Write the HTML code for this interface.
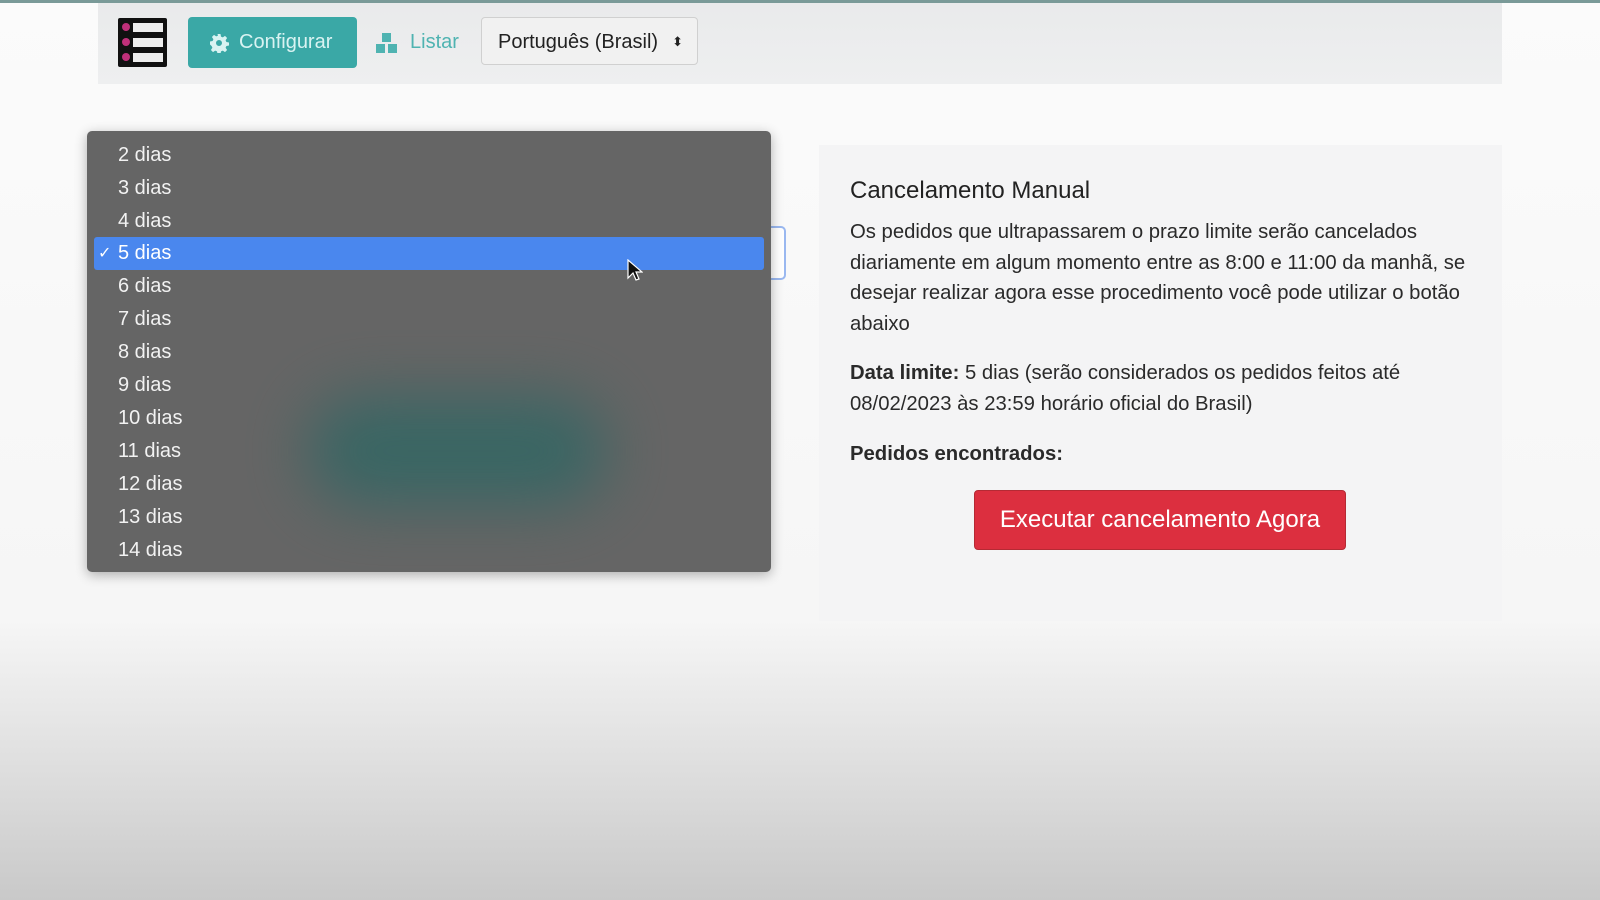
<!DOCTYPE html>
<html><head><meta charset="utf-8"><style>
body{margin:0;width:1600px;height:900px;overflow:hidden;font-family:"Liberation Sans",Arial,sans-serif;background:linear-gradient(#fbfbfb 0,#f6f6f6 620px,#c9c9c9 900px);position:relative}
.top{position:absolute;left:0;top:0;width:1600px;height:3px;background:#7a9a98}
.hdr{position:absolute;left:98px;top:3px;width:1404px;height:81px;background:linear-gradient(#e9eaeb,#eeeff0)}
.logo{position:absolute;left:118px;top:18px;width:49px;height:49px;background:#111;border-radius:2px}
.logo div{position:absolute;left:15px;width:30px;height:9px;background:#eee}
.logo span{position:absolute;left:4px;width:8px;height:8px;border-radius:50%;background:#c0307a}
.btn{position:absolute;left:188px;top:17px;width:169px;height:51px;background:#3aa8a6;border-radius:4px;color:#d9f3f2;font-size:20px;line-height:51px}
.lst{position:absolute;left:376px;top:17px;height:51px;line-height:51px;color:#4fb3b1;font-size:20px}
.sel{position:absolute;left:481px;top:17px;width:217px;height:48px;border:1px solid #d0d0d0;border-radius:4px;background:#f1f1f1;font-size:20px;line-height:48px;color:#222;box-sizing:border-box;padding-left:16px}
.dd{position:absolute;left:87px;top:131px;width:684px;height:441px;background:#656565;border-radius:5px;box-shadow:0 3px 12px rgba(0,0,0,.3);overflow:hidden}
.blur{position:absolute;left:220px;top:265px;width:300px;height:110px;background:#2f6663;border-radius:55px;filter:blur(30px);opacity:.8}
.it{position:absolute;left:31px;font-size:20px;color:#f2f2f2;height:33px;line-height:33px}
.hl{position:absolute;left:7px;top:106px;width:670px;height:33px;background:#4a87ee;border-radius:3px}
.pan{position:absolute;left:819px;top:145px;width:683px;height:476px;background:#f4f4f5}
.pan h2{position:absolute;left:31px;top:32px;margin:0;font-size:24px;font-weight:normal;color:#222}
.pan p{position:absolute;left:31px;margin:0;width:640px;font-size:20.3px;line-height:30.5px;color:#2a2a2a}
.red{position:absolute;left:155px;top:345px;width:372px;height:60px;background:#dc2f3f;border-radius:4px;border:1px solid #b52a34;box-sizing:border-box;color:#fff;font-size:24px;line-height:58px;text-align:center}
</style></head><body>
<div class="top"></div>
<div class="hdr"></div>
<div class="logo"><div style="top:5px"></div><div style="top:20px"></div><div style="top:35px"></div><span style="top:5px"></span><span style="top:20px"></span><span style="top:35px"></span></div>
<div class="btn"><svg style="position:absolute;left:21px;top:16px" width="20" height="20" viewBox="0 0 20 20"><path fill="#d9f3f2" d="M8.5 1h3l.5 2.6 1.8.8 2.2-1.5 2.1 2.1-1.5 2.2.8 1.8 2.6.5v3l-2.6.5-.8 1.8 1.5 2.2-2.1 2.1-2.2-1.5-1.8.8-.5 2.6h-3l-.5-2.6-1.8-.8-2.2 1.5-2.1-2.1 1.5-2.2-.8-1.8L1 11.5v-3l2.6-.5.8-1.8-1.5-2.2 2.1-2.1 2.2 1.5 1.8-.8zM10 7a3 3 0 100 6 3 3 0 000-6z"/></svg><span style="position:absolute;left:51px">Configurar</span></div>
<div class="lst"><svg style="position:absolute;left:0;top:16px" width="22" height="20" viewBox="0 0 22 20"><rect x="6" y="0" width="9" height="9" fill="#4fb3b1"/><rect x="0" y="11" width="9" height="9" fill="#4fb3b1"/><rect x="12" y="11" width="9" height="9" fill="#4fb3b1"/></svg><span style="position:absolute;left:34px">Listar</span></div>
<div class="sel">Português (Brasil) <span style="position:absolute;right:14px;font-size:13px">⬍</span></div>
<div style="position:absolute;left:760px;top:226px;width:22px;height:50px;border:2px solid #9ab8f0;border-radius:5px;background:#fff"></div>
<div class="dd"><div class="blur"></div><div class="hl"></div>
<div class="it" style="top:8px">2 dias</div><div class="it" style="top:41px">3 dias</div><div class="it" style="top:74px">4 dias</div>
<div class="it" style="top:106px;color:#fff"><span style="position:absolute;left:-20px;font-size:16px">✓</span>5 dias</div>
<div class="it" style="top:139px">6 dias</div><div class="it" style="top:172px">7 dias</div><div class="it" style="top:205px">8 dias</div><div class="it" style="top:238px">9 dias</div><div class="it" style="top:271px">10 dias</div><div class="it" style="top:304px">11 dias</div><div class="it" style="top:337px">12 dias</div><div class="it" style="top:370px">13 dias</div><div class="it" style="top:403px">14 dias</div>
</div>
<svg style="position:absolute;left:627px;top:259px" width="16" height="24" viewBox="0 0 16 24"><path d="M1 1v18l5-5 3 7 3-1-3-7h6z" fill="#111" stroke="#fff" stroke-width="1.2"/></svg>
<div class="pan">
<h2>Cancelamento Manual</h2>
<p style="top:72px">Os pedidos que ultrapassarem o prazo limite serão cancelados diariamente em algum momento entre as 8:00 e 11:00 da manhã, se desejar realizar agora esse procedimento você pode utilizar o botão abaixo</p>
<p style="top:213px"><b>Data limite:</b> 5 dias (serão considerados os pedidos feitos até 08/02/2023 às 23:59 horário oficial do Brasil)</p>
<p style="top:294px"><b>Pedidos encontrados:</b></p>
<div class="red">Executar cancelamento Agora</div>
</div>
</body></html>
